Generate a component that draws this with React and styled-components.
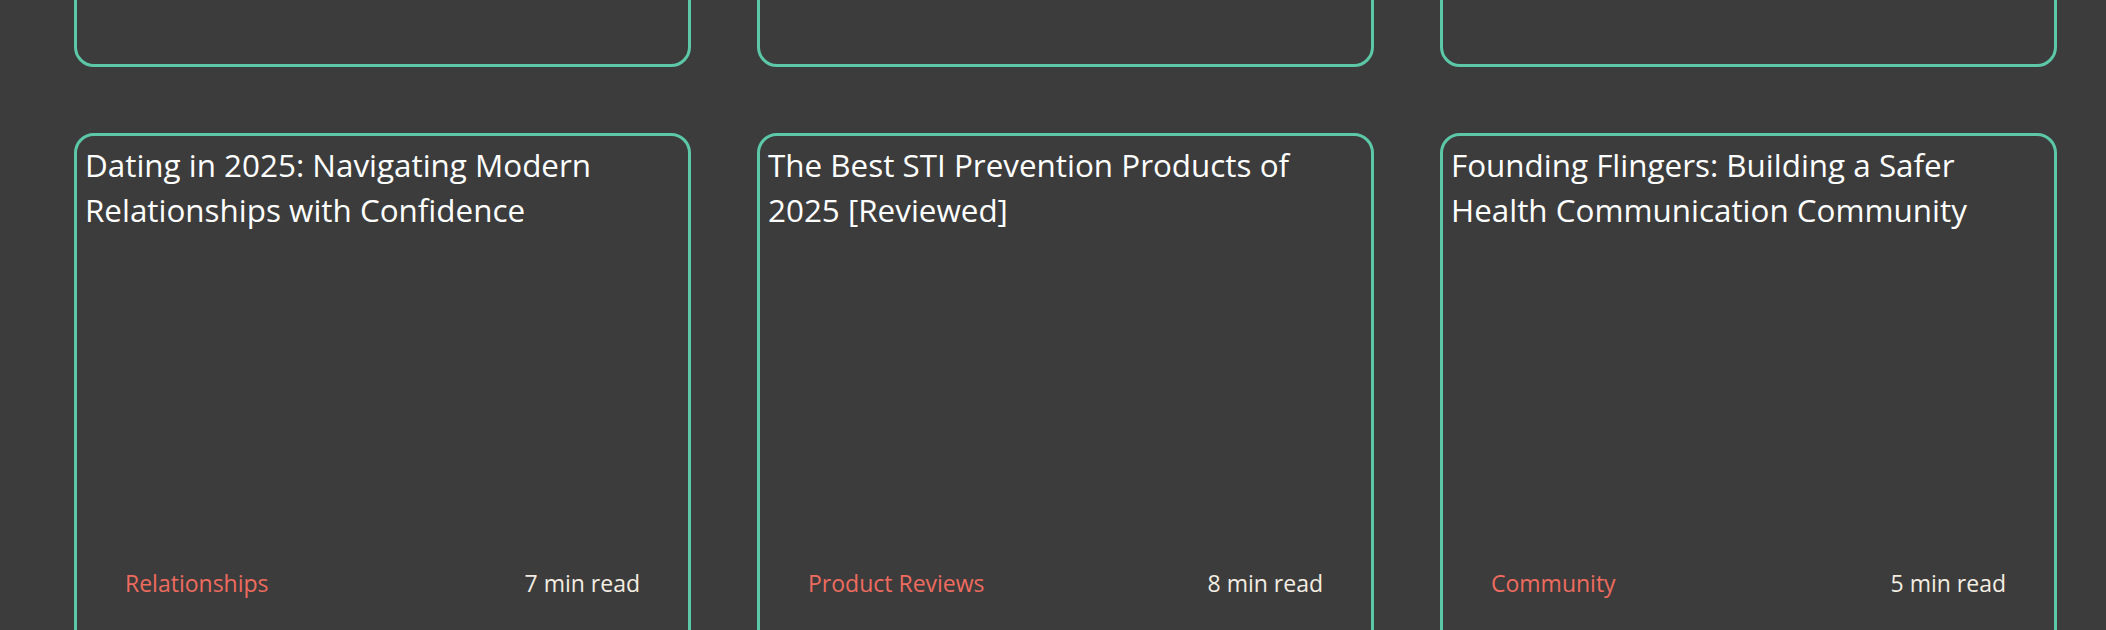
import React from "react";
import styled, { createGlobalStyle } from "styled-components";

const GlobalStyle = createGlobalStyle`
  *, *::before, *::after { box-sizing: border-box; }
  html, body { margin: 0; padding: 0; background: #3c3c3c; overflow: hidden; }
  body { font-family: "Open Sans", "Noto Sans", sans-serif; }
`;

const Page = styled.main`
  background: #3c3c3c;
  min-height: 630px;
  padding: 0 49px 0 74px;
  overflow: hidden;
`;

const Grid = styled.section`
  display: grid;
  grid-template-columns: repeat(3, 617px);
  column-gap: 66px;
  row-gap: 66px;
  margin-top: -553px;
`;

const Card = styled.article`
  display: flex;
  flex-direction: column;
  height: ${(p) => (p.$tall ? "620px" : "518px")};
  border: 3px solid #5cc8a8;
  border-radius: 20px;
  padding: 6px 8px 8px;
  background: #3c3c3c;
`;

const Title = styled.h3`
  margin: 0;
  padding-right: 10px;
  font-family: "Open Sans", "Noto Sans", sans-serif;
  font-weight: 400;
  font-size: 31.4px;
  line-height: 45px;
  color: #ffffff;
  letter-spacing: 0;
`;

const Footer = styled.div`
  margin-top: auto;
  display: flex;
  justify-content: space-between;
  align-items: baseline;
  padding: 0 40px 40px;
  font-size: 23px;
  line-height: 33px;
`;

const Category = styled.span`
  color: #ee6b5f;
`;

const ReadTime = styled.span`
  color: #f3ede2;
`;

const topRow = ["a", "b", "c"];

const posts = [
  {
    title: "Dating in 2025: Navigating Modern Relationships with Confidence",
    category: "Relationships",
    time: "7 min read",
  },
  {
    title: "The Best STI Prevention Products of 2025 [Reviewed]",
    category: "Product Reviews",
    time: "8 min read",
  },
  {
    title: "Founding Flingers: Building a Safer Health Communication Community",
    category: "Community",
    time: "5 min read",
  },
];

export default function App() {
  return (
    <>
      <GlobalStyle />
      <Page>
        <Grid>
          {topRow.map((k) => (
            <Card key={k} $tall />
          ))}
          {posts.map((p) => (
            <Card key={p.title}>
              <Title>{p.title}</Title>
              <Footer>
                <Category>{p.category}</Category>
                <ReadTime>{p.time}</ReadTime>
              </Footer>
            </Card>
          ))}
        </Grid>
      </Page>
    </>
  );
}
